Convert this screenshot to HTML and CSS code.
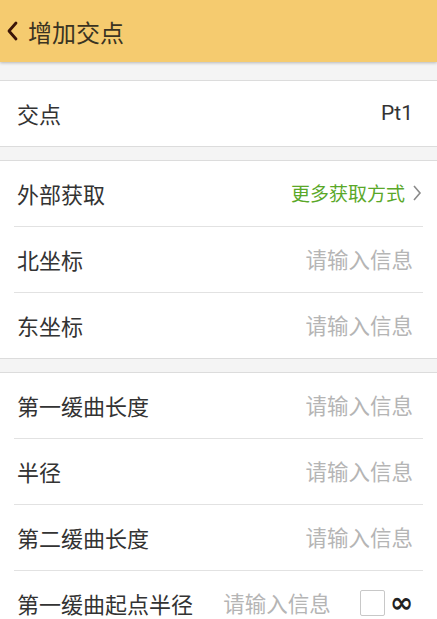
FILE: index.html
```html
<!DOCTYPE html>
<html lang="zh-CN">
<head>
  <meta charset="UTF-8" />
  <meta name="viewport" content="width=device-width, initial-scale=1.0"/>
  <title>增加交点</title>
  <link rel="stylesheet" href="styles.css">
</head>
<body>
  <header class="topbar">
    <svg class="back" width="12" height="22" viewBox="0 0 12 22">
      <path d="M10 3 L3 11 L10 19" fill="none" stroke="#3a1408" stroke-width="2.8" stroke-linecap="round" stroke-linejoin="round"/>
    </svg>
    <h1>增加交点</h1>
  </header>

  <div class="gap first"></div>
  <section class="group">
    <div class="row">
      <span class="label">交点</span>
      <span class="value">Pt1</span>
    </div>
  </section>

  <div class="gap"></div>
  <section class="group">
    <div class="row">
      <span class="label">外部获取</span>
      <span class="link">更多获取方式
        <svg class="chev" width="10" height="18" viewBox="0 0 10 18">
          <path d="M2 2 L8 9 L2 16" fill="none" stroke="#8a8a8a" stroke-width="1.6"/>
        </svg>
      </span>
    </div>
    <div class="row">
      <span class="label">北坐标</span>
      <span class="hint">请输入信息</span>
    </div>
    <div class="row">
      <span class="label">东坐标</span>
      <span class="hint">请输入信息</span>
    </div>
  </section>

  <div class="gap"></div>
  <section class="group">
    <div class="row">
      <span class="label">第一缓曲长度</span>
      <span class="hint">请输入信息</span>
    </div>
    <div class="row">
      <span class="label">半径</span>
      <span class="hint">请输入信息</span>
    </div>
    <div class="row">
      <span class="label">第二缓曲长度</span>
      <span class="hint">请输入信息</span>
    </div>
    <div class="row">
      <span class="label">第一缓曲起点半径</span>
      <span class="hint mid">请输入信息</span>
      <span class="check"></span>
      <span class="inf">∞</span>
    </div>
  </section>
</body>
</html>
```

FILE: styles.css
```css
body {
  margin: 0;
  background: #f4f4f4;
  font-family: Roboto, "Noto Sans CJK SC", sans-serif;
  color: #333;
}

.topbar {
  height: 62px;
  background: #f5cb6f;
  display: flex;
  align-items: center;
  padding-left: 6px;
  box-shadow: 0 1px 3px rgba(0, 0, 0, 0.25);
  position: relative;
}

.topbar h1 {
  margin: 0 0 0 10px;
  font-size: 24px;
  font-weight: normal;
  color: #3a3322;
}

.gap {
  height: 13px;
  border-bottom: 1px solid #dcdcdc;
}

.gap.first {
  height: 18px;
}

.group {
  background: #fff;
  border-bottom: 1px solid #dcdcdc;
}

.row {
  height: 63px;
  margin: 0 14px;
  padding: 0 10px 2px 3px;
  display: flex;
  align-items: center;
  font-size: 22px;
}

.row + .row {
  border-top: 1px solid #e2e2e2;
}

.label {
  flex: 1;
  color: #333;
}

.value {
  color: #333;
  font-size: 21px;
}

.link {
  color: #5aa829;
  font-size: 19px;
  display: flex;
  align-items: center;
  margin-right: -9px;
}

.chev {
  margin-left: 7px;
}

.hint {
  color: #b5b5b5;
  font-size: 21.5px;
}

.hint.mid {
  margin-right: 29px;
}

.check {
  width: 23px;
  height: 24px;
  border: 1px solid #c8c8c8;
  border-radius: 2px;
  margin-right: 5px;
}

.inf {
  font-family: "DejaVu Sans", sans-serif;
  font-size: 28px;
  font-weight: bold;
  color: #222;
  line-height: 1;
  margin-right: 0;
}
```
